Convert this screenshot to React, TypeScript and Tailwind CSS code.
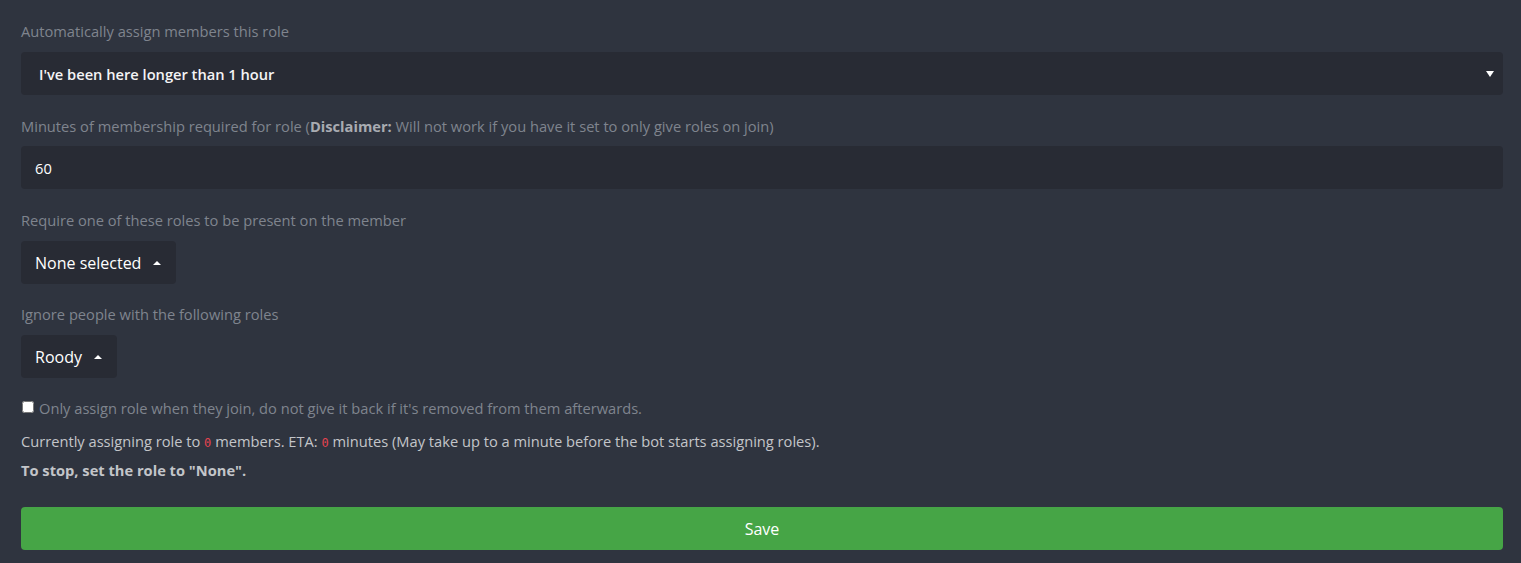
import React, { useState } from "react";

const Caret = ({ up }: { up?: boolean }) => (
  <span className={`inline-block w-0 h-0 ${up ? "border-x-[4px] border-x-transparent border-b-[4px] border-b-white" : "border-x-[4px] border-x-transparent border-t-[6px] border-t-white"}`} />
);

const App = () => {
  const [minutes, setMinutes] = useState("60");
  const [onlyOnJoin, setOnlyOnJoin] = useState(false);

  return (
    <div className="min-h-[563px] w-full bg-[#2f343f] pl-[21px] pr-[18px] pt-[21px] text-[14.667px] font-['Open_Sans',sans-serif] text-[#c3c5c9]">
      <label className="block text-[#7f848e] leading-[20px] mb-[11px]">Automatically assign members this role</label>
      <div className="flex items-center justify-between h-[43px] rounded-[4px] bg-[#282b34] pl-[18px] pr-[9px] font-semibold text-[#f4f4f5]">
        <span>I've been here longer than 1 hour</span>
        <Caret />
      </div>

      <label className="block text-[#7f848e] leading-[20px] mt-[21px] mb-[10px]">
        Minutes of membership required for role (<b className="font-bold text-[#a9acb2]">Disclaimer:</b> Will not work if you have it set to only give roles on join)
      </label>
      <input
        value={minutes}
        onChange={(e) => setMinutes(e.target.value)}
        className="block w-full h-[43px] rounded-[4px] bg-[#282b34] px-[14px] text-white outline-none"
      />

      <label className="block text-[#7f848e] leading-[20px] mt-[21px] mb-[11px]">Require one of these roles to be present on the member</label>
      <button className="flex items-center gap-[12px] h-[43px] rounded-[4px] bg-[#282b34] pl-[14px] pr-[15px] text-[16px] text-white">
        None selected <Caret up />
      </button>

      <label className="block text-[#7f848e] leading-[20px] mt-[20px] mb-[11px]">Ignore people with the following roles</label>
      <button className="flex items-center gap-[12px] h-[43px] rounded-[4px] bg-[#282b34] pl-[14px] pr-[15px] text-[16px] text-white">
        Roody <Caret up />
      </button>

      <div className="flex items-center mt-[20px] text-[#7f848e] leading-[20px]">
        <input
          type="checkbox"
          checked={onlyOnJoin}
          onChange={(e) => setOnlyOnJoin(e.target.checked)}
          className="w-[12px] h-[12px] ml-[1px] mr-[5px] -mt-[3px] accent-white"
        />
        <span>Only assign role when they join, do not give it back if it's removed from them afterwards.</span>
      </div>

      <p className="mt-[13px] leading-[20px]">
        Currently assigning role to <code className="font-['DejaVu_Sans_Mono',monospace] text-[12px] text-[#e5434f]">0</code> members. ETA: <code className="font-['DejaVu_Sans_Mono',monospace] text-[12px] text-[#e5434f]">0</code> minutes (May take up to a minute before the bot starts assigning roles).
      </p>
      <p className="mt-[7px] leading-[20px] font-bold">To stop, set the role to "None".</p>

      <button className="block w-full h-[43px] mt-[27px] rounded-[4px] bg-[#46a546] text-[16px] text-white">Save</button>
    </div>
  );
};

export default App;
